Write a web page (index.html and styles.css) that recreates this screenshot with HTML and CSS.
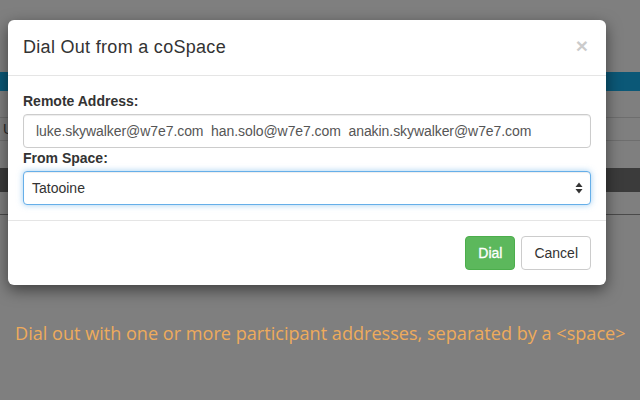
FILE: index.html
```html
<!DOCTYPE html>
<html>
<head>
<meta charset="utf-8">
<link rel="stylesheet" href="styles.css">
</head>
<body>
<div class="page">
  <div class="navbar"></div>
  <div class="toolbar"><span class="tab">U</span></div>
  <div class="table-head"></div>
  <div class="table-row"></div>
</div>

<div class="modal">
  <div class="modal-header">
    <span class="close">×</span>
    <h4 class="modal-title">Dial Out from a coSpace</h4>
  </div>
  <div class="modal-body">
    <label class="field-label">Remote Address:</label>
    <input class="form-control" type="text" value="luke.skywalker@w7e7.com  han.solo@w7e7.com  anakin.skywalker@w7e7.com">
    <label class="field-label">From Space:</label>
    <div class="form-control select-focus">
      <span>Tatooine</span>
      <svg class="updown" width="8" height="12" viewBox="0 0 8 12"><path d="M4 0.5 L7.5 5 L0.5 5 Z" fill="#333"/><path d="M0.5 7 L7.5 7 L4 11.5 Z" fill="#333"/></svg>
    </div>
  </div>
  <div class="modal-footer">
    <button class="btn btn-success">Dial</button>
    <button class="btn btn-default">Cancel</button>
  </div>
</div>

<p class="caption">Dial out with one or more participant addresses, separated by a &lt;space&gt;</p>
</body>
</html>
```
FILE: styles.css
```css
html, body {
  margin: 0;
  padding: 0;
}
body {
  width: 640px;
  height: 400px;
  overflow: hidden;
  position: relative;
  background: #7f7f7f;
  font-family: "Liberation Sans", Arial, sans-serif;
  font-size: 14px;
  color: #333;
}
.page {
  padding-top: 72px;
}
.navbar {
  height: 19px;
  background: #0b5877;
}
.toolbar {
  margin-top: 26px;
  height: 22px;
  border-top: 1px solid #6e6e6e;
  border-bottom: 1px solid #6e6e6e;
  display: flex;
}
.tab {
  margin-left: -4px;
  padding: 0 6px;
  border: 1px solid #6a6a6a;
  border-top: 0;
  border-bottom: 0;
  color: #2a2a2a;
  line-height: 22px;
  font-size: 14px;
}
.table-head {
  margin-top: 27px;
  height: 24px;
  background: #3b3b3b;
}
.table-row {
  margin-top: 22px;
  height: 1px;
  background: #4a4a4a;
}
.modal {
  position: absolute;
  left: 8px;
  top: 20px;
  width: 598px;
  background: #fff;
  border-radius: 6px;
  box-shadow: 0 5px 15px rgba(0,0,0,.5);
}
.modal-header {
  padding: 15px;
  border-bottom: 1px solid #e5e5e5;
}
.modal-title {
  margin: 0;
  font-size: 18px;
  font-weight: normal;
  line-height: 25px;
  letter-spacing: 0.3px;
  color: #333;
}
.close {
  float: right;
  font-size: 21px;
  font-weight: bold;
  line-height: 1;
  color: #000;
  opacity: .2;
  margin-top: 0;
  margin-right: 3px;
}
.modal-body {
  padding: 15px;
}
.field-label {
  display: block;
  font-weight: bold;
  line-height: 20px;
  margin-bottom: 3px;
}
.form-control {
  display: block;
  box-sizing: border-box;
  width: 100%;
  height: 34px;
  padding: 6px 12px;
  margin: 0;
  font-family: "Liberation Sans", Arial, sans-serif;
  font-size: 14px;
  line-height: 20px;
  color: #555;
  background: #fff;
  border: 1px solid #ccc;
  border-radius: 4px;
  box-shadow: inset 0 1px 1px rgba(0,0,0,.075);
  white-space: pre;
}
input.form-control {
  outline: none;
  letter-spacing: -0.07px;
}
.select-focus {
  display: flex;
  align-items: center;
  justify-content: space-between;
  padding: 6px 7px 6px 8px;
  color: #333;
  border-color: #66afe9;
  box-shadow: inset 0 1px 1px rgba(0,0,0,.075), 0 0 6px rgba(102,175,233,.6);
}
.modal-footer {
  padding: 15px;
  border-top: 1px solid #e5e5e5;
  display: flex;
  justify-content: flex-end;
  gap: 6px;
}
.btn {
  box-sizing: border-box;
  height: 34px;
  padding: 6px 12px;
  font-family: "Liberation Sans", Arial, sans-serif;
  font-size: 14px;
  line-height: 20px;
  border: 1px solid transparent;
  border-radius: 4px;
  margin: 0;
}
.btn-success {
  background: #5cb85c;
  border-color: #4cae4c;
  color: #fff;
  font-weight: normal;
  -webkit-text-stroke: 0.3px #fff;
}
.btn-default {
  background: #fff;
  border-color: #ccc;
  color: #333;
}
.caption {
  position: absolute;
  left: 15px;
  top: 321px;
  margin: 0;
  font-family: "Open Sans", sans-serif;
  font-size: 18.1px;
  color: #eeab5c;
  white-space: nowrap;
}
```
